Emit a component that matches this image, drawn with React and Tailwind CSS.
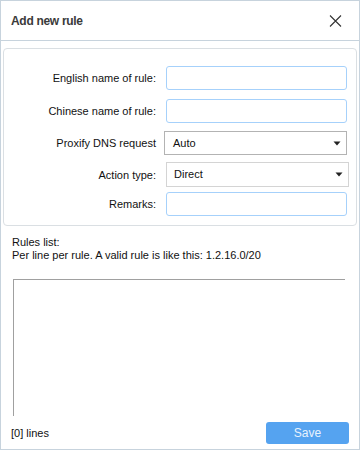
import React from "react";

const font = { fontFamily: '"Liberation Sans", Arial, sans-serif' };

function Caret() {
  return (
    <svg width="8" height="5" viewBox="0 0 8 5" className="block">
      <path d="M0.5 0.5 L7.5 0.5 L4 4.5 Z" fill="#222" />
    </svg>
  );
}

function Row({ label, mt, children }) {
  return (
    <div className="flex items-center" style={{ marginTop: mt }}>
      <div className="w-[152px] shrink-0 text-right text-[11px] leading-[14px] text-[#111]">{label}</div>
      {children}
    </div>
  );
}

function Input() {
  return <div className="ml-[10px] h-[24px] w-[181px] rounded-[3px] border border-[#a6d1fb] bg-white" />;
}

export default function App() {
  return (
    <div className="w-[360px] h-[450px] border border-[#c7d3dd] bg-white flex flex-col text-[#111]" style={font}>
      <div className="h-[40px] shrink-0 border-b border-[#c7d3dd] flex items-center justify-between pl-[10px] pr-[17px]">
        <span className="text-[12px] font-bold text-[#3a3a3a] tracking-[-0.3px]">Add new rule</span>
        <svg width="13" height="12" viewBox="0 0 13 12">
          <path d="M1 0.5 L12 11.5 M12 0.5 L1 11.5" stroke="#333" strokeWidth="1.1" fill="none" />
        </svg>
      </div>
      <div className="mt-[7px] mx-[2px] h-[178px] rounded-[4px] border border-[#dadfe3] pt-[17px]">
        <Row label="English name of rule:" mt={0}>
          <Input />
        </Row>
        <Row label="Chinese name of rule:" mt={9}>
          <Input />
        </Row>
        <Row label="Proxify DNS request" mt={8}>
          <div className="ml-[8px] h-[24px] w-[183px] border border-[#b3b3b3] bg-white flex items-center justify-between pl-[8px] pr-[5px] text-[11px]">
            <span>Auto</span>
            <Caret />
          </div>
        </Row>
        <Row label="Action type:" mt={7}>
          <div className="ml-[10px] h-[25px] w-[183px] border border-[#d4d4d4] bg-white flex items-center justify-between pl-[7px] pr-[5px] text-[11px]">
            <span>Direct</span>
            <Caret />
          </div>
        </Row>
        <Row label="Remarks:" mt={5}>
          <Input />
        </Row>
      </div>
      <div className="mt-[10px] pl-[11px] text-[11px] leading-[13px]">
        <div>Rules list:</div>
        <div>Per line per rule. A valid rule is like this: 1.2.16.0/20</div>
      </div>
      <div className="mt-[17px] ml-[12px] w-[332px] h-[137px] border-t border-l border-[#a0a0a0] bg-white" />
      <div className="flex items-center justify-between pl-[10px] pr-[10px] mt-[6px]">
        <span className="text-[11px]">[0] lines</span>
        <button className="w-[83px] h-[22px] rounded-[3px] bg-[#55a3f0] text-[12px] text-[#e8f2fd]" style={font}>
          Save
        </button>
      </div>
    </div>
  );
}
